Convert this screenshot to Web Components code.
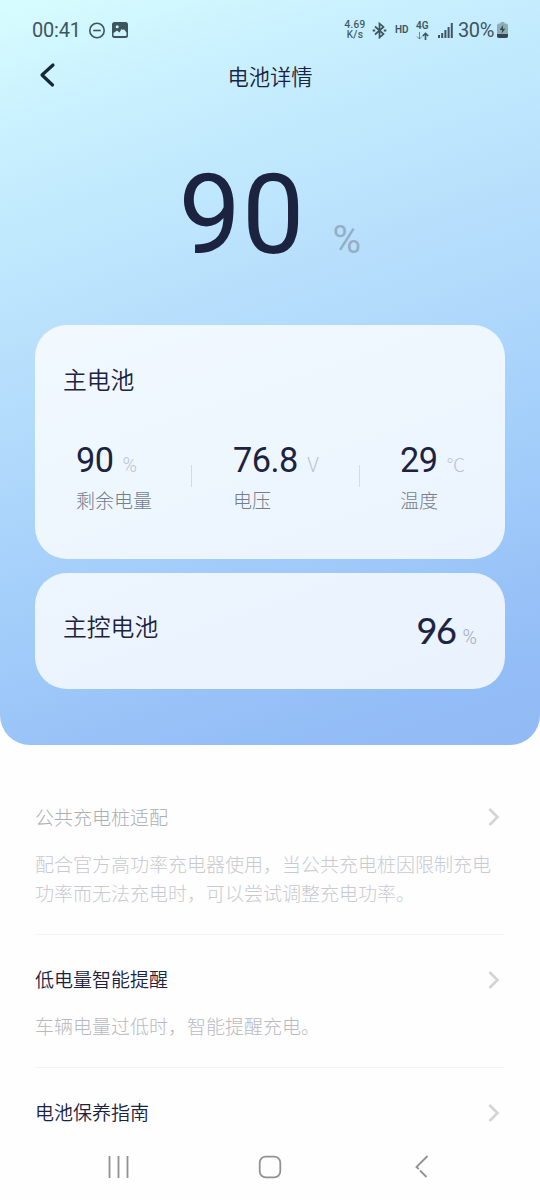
<!DOCTYPE html>
<html lang="zh-CN">
<head>
<meta charset="utf-8">
<title>电池详情</title>
<style>
html,body{margin:0;height:1200px;overflow:hidden;background:#fefefe}
body{font-family:Roboto,"Noto Sans CJK SC",sans-serif;color:#1c2340}
</style>
</head>
<body>
<battery-page></battery-page>
<script>
const define = (name, html) => customElements.define(name, class extends HTMLElement {
  constructor() {
    super();
    this.attachShadow({ mode: 'open' }).innerHTML = html;
  }
});

define('status-bar', `
<style>
:host{display:flex;height:60px;box-sizing:border-box;padding:0 32px 0 32px;align-items:center;color:#3f555e;justify-content:space-between}
div{display:flex;align-items:center}
svg{display:block;flex:none}
.time{font-size:20px;line-height:24px;width:48px;letter-spacing:-.2px;white-space:nowrap}
.speed{display:flex;flex-direction:column;font-size:10px;line-height:10px;text-align:center;width:22px;font-weight:400;letter-spacing:.35px;white-space:nowrap;-webkit-text-stroke:.2px}
.hd{font-size:10px;font-weight:600;margin-left:8px;width:14px;line-height:12px}
.net{display:block;margin-left:7px;width:14px;font-size:10px;line-height:10px;font-weight:600}
.net svg{margin-top:1px}
.pct{font-size:20px;line-height:24px;letter-spacing:-.4px;margin-left:5px;width:39px;white-space:nowrap}
</style>
<div>
  <span class="time">00:41</span>
  <svg style="margin-left:8px" width="18" height="18" viewBox="0 0 18 18" fill="none" stroke="currentColor" stroke-width="1.6"><circle cx="9" cy="9.5" r="7.2"/><path d="M5.2 9.5h7.6"/></svg>
  <svg style="margin-left:6px" width="16" height="16" viewBox="0 0 16 16"><rect width="16" height="16" rx="2.5" fill="currentColor"/><circle cx="5.2" cy="4.8" r="1.5" fill="#cdf3fc"/><path d="M1.5 11l3.5-2.5 2.5 2 2-3.5 1.3 1 1.2-.8 2.5 3.3v2.5q0 .9-.9.9H2.4q-.9 0-.9-.9z" fill="#cdf3fc"/></svg>
</div>
<div>
  <div class="speed"><span>4.69</span><span>K/s</span></div>
  <svg style="margin-left:6px" width="15" height="18" viewBox="0 0 15 18" fill="none" stroke="currentColor" stroke-width="1.7"><path d="M3 5.5l8.5 7.6-4 3.4v-14l4 3.4L3 13.5"/><path d="M.7 9.5h2.5M11.8 9.5h2.5" stroke-width="2.2"/></svg>
  <span class="hd">HD</span>
  <div class="net"><span>4G</span><svg width="14" height="8" viewBox="0 0 14 8" fill="none" stroke="currentColor"><path d="M3.5 0v7M1 4.5L3.5 7 6 4.5" opacity=".65"/><path d="M9.5 8V1.5M6.8 4l2.7-2.7L12.2 4" stroke-width="1.6"/></svg></div>
  <svg style="margin:1px 0 0 8px" width="15" height="15" viewBox="0 0 15 15" fill="currentColor"><path d="M0 12h2v3H0zM3.2 10h2v5h-2zM6.4 7h2v8h-2zM9.6 4h2v11h-2zM12.8 0h2v15h-2z"/></svg>
  <span class="pct">30%</span>
  <svg width="11" height="16" viewBox="0 0 11 16"><path d="M3.5 0h4v1.5H9q2 0 2 2V14q0 2-2 2H2q-2 0-2-2V3.5q0-2 2-2h1.5z" fill="#91abb4"/><path d="M0 12h11v2q0 2-2 2H2q-2 0-2-2z" fill="#34464f"/><path d="M6.2 3L2.7 8h2.5l-.6 3.5L8.3 6.7H5.8z" fill="#34464f"/></svg>
</div>`);

define('title-bar', `
<style>
:host{display:grid;grid-template-columns:80px 1fr 80px;height:36px;align-items:center}
svg{display:block;margin:-6px 0 0 38px}
h1{margin:0;text-align:center;font-size:21.3px;font-weight:350;line-height:36px}
</style>
<svg width="18" height="26" viewBox="0 0 18 26" fill="none" stroke="#152738" stroke-width="3.2" stroke-linecap="round" stroke-linejoin="round"><path d="M15 3L4 13l10.5 10"/></svg>
<h1><slot></slot></h1>`);

define('charge-level', `
<style>
:host{display:flex;align-items:baseline;height:229px;box-sizing:border-box;padding:54px 0 0 178.5px}
.num{font-size:111px;line-height:130px;letter-spacing:1px;width:154px}
.unit{font-size:39px;line-height:40px;color:#93afc8;font-weight:400}
</style>
<span class="num"><slot></slot></span><span class="unit">%</span>`);

define('glass-card', `
<style>
:host{display:block;box-sizing:border-box;margin:0 35px;border-radius:32px;background:rgba(255,255,255,.8)}
</style><slot></slot>`);

define('metric-item', `
<style>
:host{display:block;white-space:nowrap}
.row{display:flex;align-items:baseline;height:40px}
.num{font-size:34.3px;line-height:40px;letter-spacing:-.5px}
.unit{font-size:19.5px;font-weight:300;color:#bcc4cf;line-height:20px;margin-left:9px}
.label{font-size:19px;line-height:28px;margin-top:8px;color:#747e8e;font-weight:300}
</style>
<div class="row"><span class="num"><slot></slot></span><span class="unit"><slot name="unit"></slot></span></div>
<div class="label"><slot name="label"></slot></div>`);

define('main-battery', `
<style>
:host{display:block;height:234px;box-sizing:border-box;padding:38px 28px 0}
h2{margin:0;font-size:23.8px;line-height:36px;font-weight:350}
.metrics{display:flex;padding:41px 0 0 13px}
metric-item:nth-of-type(1){width:115px}
metric-item:nth-of-type(2){width:126px}
i{width:1px;height:22px;background:#d2dbe6;margin-top:25px;flex:none}
i+metric-item{margin-left:41px}
i+metric-item:last-child{margin-left:40px}
</style>
<h2>主电池</h2>
<div class="metrics">
<metric-item>90<span slot="unit">%</span><span slot="label">剩余电量</span></metric-item><i></i>
<metric-item>76.8<span slot="unit">V</span><span slot="label">电压</span></metric-item><i></i>
<metric-item>29<span slot="unit" style="font-size:18.5px">℃</span><span slot="label">温度</span></metric-item>
</div>`);

define('control-battery', `
<style>
:host{display:flex;height:116px;box-sizing:border-box;padding:0 28px;justify-content:space-between;align-items:center}
h2{margin:0;padding-bottom:6px;font-size:23.8px;line-height:36px;font-weight:350}
.v{display:flex;align-items:baseline;margin-top:-2px}
.num{font:400 36px/44px Lato,sans-serif;letter-spacing:-1.3px;-webkit-text-stroke:.2px}
.unit{font-size:19.5px;font-weight:300;color:#a4adbb;line-height:20px;margin-left:7px}
</style>
<h2>主控电池</h2><div class="v"><span class="num">96</span><span class="unit">%</span></div>`);

define('setting-row', `
<style>
:host{display:block;margin:0 36px 0 35px;border-bottom:1px solid #f4f4f5;box-sizing:border-box}
:host([last]){border:0}
.head{display:flex;justify-content:space-between;align-items:center;height:28px;font-size:19px;line-height:28px;font-weight:350;padding-right:4px}
.head span{margin-top:1px}
:host([muted]) .head{color:#adaeb2;font-weight:300}
:host([muted]) .head span{margin-top:3px}
svg{display:block}
.desc{font-size:19px;line-height:28.5px;color:#b9bac1;font-weight:300;margin-top:19.5px;white-space:nowrap}
:host([muted]) .desc{color:#c9cad0;margin-top:21px}
</style>
<div class="head"><span><slot></slot></span><svg width="12" height="20" viewBox="0 0 12 20" fill="none" stroke="#d4d4d4" stroke-width="2.6"><path d="M1.5 2l8 8-8 8"/></svg></div>
<div class="desc"><slot name="desc"></slot></div>`);

define('nav-bar', `
<style>
:host{display:flex;height:24px;padding:2px 111px 0 107px;align-items:center}
svg{display:block}
svg:nth-of-type(2){margin:0 auto 0 127.5px}
</style>
<svg width="23" height="24" viewBox="0 0 23 24" fill="none" stroke="#929292" stroke-width="1.8"><path d="M2.5 1v22M11.5 1v22M20.5 1v22"/></svg>
<svg width="24" height="24" viewBox="0 0 24 24" fill="none" stroke="#929292" stroke-width="1.8"><rect x="1.7" y="1.7" width="20.6" height="20.6" rx="6"/></svg>
<svg width="15" height="24" viewBox="0 0 15 24" fill="none" stroke="#929292" stroke-width="1.8"><path d="M13.5 1L2.5 12l2.3 2.2"/><path d="M6 15.5l6.5 6.5" /></svg>`);

define('battery-page', `
<style>
:host{display:block;width:540px;height:1200px;background:#fefefe;overflow:hidden}
.hero{height:745px;border-radius:0 0 30px 30px;background:linear-gradient(161deg,#d8fdff 0%,#c8f0fe 15%,#b5ddfc 43%,#a2cdfa 68%,#93bdf6 90%,#92bbf5 100%)}
glass-card+glass-card{margin-top:14px}
.list{height:408px;overflow:hidden}
setting-row:nth-child(1){padding-top:58px;height:190px}
setting-row:nth-child(2){padding-top:31px;height:133px}
setting-row:nth-child(3){padding-top:31px}
</style>
<div class="hero">
<status-bar></status-bar>
<title-bar>电池详情</title-bar>
<charge-level>90</charge-level>
<glass-card><main-battery></main-battery></glass-card>
<glass-card><control-battery></control-battery></glass-card>
</div>
<div class="list">
<setting-row muted>公共充电桩适配<span slot="desc">配合官方高功率充电器使用，当公共充电桩因限制充电<br>功率而无法充电时，可以尝试调整充电功率。</span></setting-row>
<setting-row>低电量智能提醒<span slot="desc">车辆电量过低时，智能提醒充电。</span></setting-row>
<setting-row last>电池保养指南</setting-row>
</div>
<nav-bar></nav-bar>`);
</script>
</body>
</html>
